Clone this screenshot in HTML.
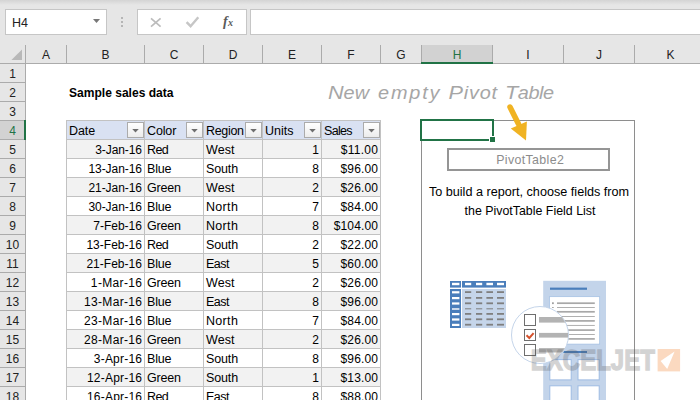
<!DOCTYPE html>
<html><head><meta charset="utf-8"><title>Pivot Table</title>
<style>
html,body{margin:0;padding:0;}
body{width:700px;height:400px;overflow:hidden;position:relative;background:#fff;font-family:"Liberation Sans",sans-serif;font-size:12px;color:#000;}
.a{position:absolute;}
.chrome{left:0;top:0;width:700px;height:64px;background:#e6e6e6;}
.topgrad{left:0;top:0;width:700px;height:5px;background:linear-gradient(#d4d4d4,#e6e6e6);}
.box{background:#fff;border:1px solid #c6c6c6;box-sizing:border-box;}
.ch{top:45px;height:18px;line-height:20px;text-align:center;color:#222;}
.vs{top:45px;width:1px;height:18px;background:#ababab;}
.rh{left:0;width:25px;height:18px;line-height:20px;text-align:center;color:#222;}
.hs{left:0;width:25px;height:1px;background:#ababab;}
.c{height:18px;line-height:20px;white-space:nowrap;font-size:12.5px;}
.n{font-size:12px;}
.r{text-align:right;}
.fb{width:15px;height:14px;border:1px solid #ababab;background:linear-gradient(#fff,#ececec);box-sizing:content-box;}
.fb i{position:absolute;left:3.8px;top:5.5px;width:7.4px;height:4px;background:#6e6e6e;clip-path:polygon(0 0,100% 0,50% 100%);}
</style></head><body>
<div class="a chrome"></div>
<div class="a topgrad"></div>
<div class="a box" style="left:5px;top:9px;width:102px;height:26px;"></div>
<div class="a" style="left:12px;top:16px;line-height:14px;font-size:12.5px;color:#222;">H4</div>
<div class="a" style="left:93px;top:19px;width:7px;height:4px;background:#777;clip-path:polygon(0 0,100% 0,50% 100%);"></div>
<div class="a" style="left:121px;top:17px;width:2px;height:2px;background:#b5b5b5;"></div>
<div class="a" style="left:121px;top:21px;width:2px;height:2px;background:#b5b5b5;"></div>
<div class="a" style="left:121px;top:25px;width:2px;height:2px;background:#b5b5b5;"></div>
<div class="a box" style="left:137px;top:9px;width:110px;height:26px;"></div>
<svg class="a" style="left:137px;top:9px;" width="110" height="26" viewBox="0 0 110 26">
<path d="M14 9.3 L23.6 17.7 M23.6 9.3 L14 17.7" stroke="#bcbcbc" stroke-width="1.7" fill="none"/>
<path d="M49.6 13.2 L53.6 17.2 L61.3 8.3" stroke="#c6c6c6" stroke-width="2.4" fill="none"/>
<text x="86" y="17" font-family="Liberation Serif,serif" font-style="italic" font-weight="bold" font-size="14" fill="#5a5a5a">f</text>
<text x="91" y="17" font-family="Liberation Serif,serif" font-style="italic" font-weight="bold" font-size="10" fill="#5a5a5a">x</text>
</svg>
<div class="a box" style="left:250px;top:9px;width:460px;height:26px;"></div>
<div class="a" style="left:0;top:63px;width:700px;height:1px;background:#ababab;"></div>

<div class="a" style="left:11.2px;top:49.4px;width:10.8px;height:10.8px;background:#b8b8b8;clip-path:polygon(100% 0,100% 100%,0 100%);"></div>
<div class="a ch" style="left:26px;width:40px;">A</div>
<div class="a ch" style="left:67px;width:77px;">B</div>
<div class="a ch" style="left:145px;width:58px;">C</div>
<div class="a ch" style="left:204px;width:58px;">D</div>
<div class="a ch" style="left:263px;width:58px;">E</div>
<div class="a ch" style="left:322px;width:58px;">F</div>
<div class="a ch" style="left:381px;width:40px;">G</div>
<div class="a" style="left:422px;top:45px;width:70px;height:17px;background:#d2d2d2;"></div>
<div class="a" style="left:421px;top:62px;width:72px;height:2px;background:#217346;z-index:2;"></div>
<div class="a ch" style="left:422px;width:70px;color:#217346;">H</div>
<div class="a ch" style="left:493px;width:70px;">I</div>
<div class="a ch" style="left:564px;width:70px;">J</div>
<div class="a ch" style="left:635px;width:71px;">K</div>
<div class="a vs" style="left:25px;"></div>
<div class="a vs" style="left:66px;"></div>
<div class="a vs" style="left:144px;"></div>
<div class="a vs" style="left:203px;"></div>
<div class="a vs" style="left:262px;"></div>
<div class="a vs" style="left:321px;"></div>
<div class="a vs" style="left:380px;"></div>
<div class="a vs" style="left:421px;"></div>
<div class="a vs" style="left:492px;"></div>
<div class="a vs" style="left:563px;"></div>
<div class="a vs" style="left:634px;"></div>
<div class="a" style="left:0;top:64px;width:25px;height:336px;background:#e6e6e6;"></div>
<div class="a" style="left:25px;top:64px;width:1px;height:336px;background:#ababab;"></div>
<div class="a rh" style="top:64px;">1</div>
<div class="a hs" style="top:82px;"></div>
<div class="a rh" style="top:83px;">2</div>
<div class="a hs" style="top:101px;"></div>
<div class="a rh" style="top:102px;">3</div>
<div class="a hs" style="top:120px;"></div>
<div class="a" style="left:0;top:121px;width:24px;height:18px;background:#d2d2d2;"></div>
<div class="a" style="left:24px;top:120px;width:2px;height:20px;background:#217346;z-index:2;"></div>
<div class="a rh" style="top:121px;color:#217346;">4</div>
<div class="a hs" style="top:139px;"></div>
<div class="a rh" style="top:140px;">5</div>
<div class="a hs" style="top:158px;"></div>
<div class="a rh" style="top:159px;">6</div>
<div class="a hs" style="top:177px;"></div>
<div class="a rh" style="top:178px;">7</div>
<div class="a hs" style="top:196px;"></div>
<div class="a rh" style="top:197px;">8</div>
<div class="a hs" style="top:215px;"></div>
<div class="a rh" style="top:216px;">9</div>
<div class="a hs" style="top:234px;"></div>
<div class="a rh" style="top:235px;">10</div>
<div class="a hs" style="top:253px;"></div>
<div class="a rh" style="top:254px;">11</div>
<div class="a hs" style="top:272px;"></div>
<div class="a rh" style="top:273px;">12</div>
<div class="a hs" style="top:291px;"></div>
<div class="a rh" style="top:292px;">13</div>
<div class="a hs" style="top:310px;"></div>
<div class="a rh" style="top:311px;">14</div>
<div class="a hs" style="top:329px;"></div>
<div class="a rh" style="top:330px;">15</div>
<div class="a hs" style="top:348px;"></div>
<div class="a rh" style="top:349px;">16</div>
<div class="a hs" style="top:367px;"></div>
<div class="a rh" style="top:368px;">17</div>
<div class="a hs" style="top:386px;"></div>
<div class="a rh" style="top:387px;">18</div>
<div class="a hs" style="top:405px;"></div>
<div class="a c" style="left:69px;top:83px;font-weight:bold;font-size:12.05px;">Sample sales data</div>
<div class="a" style="left:66px;top:120px;width:315px;height:286px;background:#c2c2c2;"></div>
<div class="a" style="left:67px;top:121px;width:77px;height:18px;background:#d9e1f2;"></div>
<div class="a c" style="left:69px;top:121px;letter-spacing:-0.10px;">Date</div>
<div class="a fb" style="left:127px;top:122px;"><i></i></div>
<div class="a" style="left:145px;top:121px;width:58px;height:18px;background:#d9e1f2;"></div>
<div class="a c" style="left:147px;top:121px;letter-spacing:-0.13px;">Color</div>
<div class="a fb" style="left:186px;top:122px;"><i></i></div>
<div class="a" style="left:204px;top:121px;width:58px;height:18px;background:#d9e1f2;"></div>
<div class="a c" style="left:206px;top:121px;letter-spacing:-0.32px;">Region</div>
<div class="a fb" style="left:245px;top:122px;"><i></i></div>
<div class="a" style="left:263px;top:121px;width:58px;height:18px;background:#d9e1f2;"></div>
<div class="a c" style="left:265px;top:121px;letter-spacing:0.03px;">Units</div>
<div class="a fb" style="left:304px;top:122px;"><i></i></div>
<div class="a" style="left:322px;top:121px;width:58px;height:18px;background:#d9e1f2;"></div>
<div class="a c" style="left:324px;top:121px;letter-spacing:-0.70px;">Sales</div>
<div class="a fb" style="left:363px;top:122px;"><i></i></div>
<div class="a" style="left:67px;top:140px;width:77px;height:18px;background:#f2f2f2;"></div>
<div class="a c r n" style="left:67px;top:140px;width:74.91px;letter-spacing:-0.09px;">3-Jan-16</div>
<div class="a" style="left:145px;top:140px;width:58px;height:18px;background:#f2f2f2;"></div>
<div class="a c" style="left:147px;top:140px;letter-spacing:-0.60px;">Red</div>
<div class="a" style="left:204px;top:140px;width:58px;height:18px;background:#f2f2f2;"></div>
<div class="a c" style="left:206px;top:140px;letter-spacing:0.07px;">West</div>
<div class="a" style="left:263px;top:140px;width:58px;height:18px;background:#f2f2f2;"></div>
<div class="a c r n" style="left:263px;top:140px;width:56.17px;letter-spacing:0.17px;">1</div>
<div class="a" style="left:322px;top:140px;width:58px;height:18px;background:#f2f2f2;"></div>
<div class="a c r n" style="left:322px;top:140px;width:56.30px;letter-spacing:0.30px;">$11.00</div>
<div class="a" style="left:67px;top:159px;width:77px;height:18px;background:#ffffff;"></div>
<div class="a c r n" style="left:67px;top:159px;width:74.94px;letter-spacing:-0.06px;">13-Jan-16</div>
<div class="a" style="left:145px;top:159px;width:58px;height:18px;background:#ffffff;"></div>
<div class="a c" style="left:147px;top:159px;letter-spacing:-0.19px;">Blue</div>
<div class="a" style="left:204px;top:159px;width:58px;height:18px;background:#ffffff;"></div>
<div class="a c" style="left:206px;top:159px;letter-spacing:-0.13px;">South</div>
<div class="a" style="left:263px;top:159px;width:58px;height:18px;background:#ffffff;"></div>
<div class="a c r n" style="left:263px;top:159px;width:56.17px;letter-spacing:0.17px;">8</div>
<div class="a" style="left:322px;top:159px;width:58px;height:18px;background:#ffffff;"></div>
<div class="a c r n" style="left:322px;top:159px;width:56.15px;letter-spacing:0.15px;">$96.00</div>
<div class="a" style="left:67px;top:178px;width:77px;height:18px;background:#f2f2f2;"></div>
<div class="a c r n" style="left:67px;top:178px;width:74.94px;letter-spacing:-0.06px;">21-Jan-16</div>
<div class="a" style="left:145px;top:178px;width:58px;height:18px;background:#f2f2f2;"></div>
<div class="a c" style="left:147px;top:178px;letter-spacing:-0.20px;">Green</div>
<div class="a" style="left:204px;top:178px;width:58px;height:18px;background:#f2f2f2;"></div>
<div class="a c" style="left:206px;top:178px;letter-spacing:0.07px;">West</div>
<div class="a" style="left:263px;top:178px;width:58px;height:18px;background:#f2f2f2;"></div>
<div class="a c r n" style="left:263px;top:178px;width:56.17px;letter-spacing:0.17px;">2</div>
<div class="a" style="left:322px;top:178px;width:58px;height:18px;background:#f2f2f2;"></div>
<div class="a c r n" style="left:322px;top:178px;width:56.15px;letter-spacing:0.15px;">$26.00</div>
<div class="a" style="left:67px;top:197px;width:77px;height:18px;background:#ffffff;"></div>
<div class="a c r n" style="left:67px;top:197px;width:74.94px;letter-spacing:-0.06px;">30-Jan-16</div>
<div class="a" style="left:145px;top:197px;width:58px;height:18px;background:#ffffff;"></div>
<div class="a c" style="left:147px;top:197px;letter-spacing:-0.19px;">Blue</div>
<div class="a" style="left:204px;top:197px;width:58px;height:18px;background:#ffffff;"></div>
<div class="a c" style="left:206px;top:197px;letter-spacing:0.32px;">North</div>
<div class="a" style="left:263px;top:197px;width:58px;height:18px;background:#ffffff;"></div>
<div class="a c r n" style="left:263px;top:197px;width:56.17px;letter-spacing:0.17px;">7</div>
<div class="a" style="left:322px;top:197px;width:58px;height:18px;background:#ffffff;"></div>
<div class="a c r n" style="left:322px;top:197px;width:56.15px;letter-spacing:0.15px;">$84.00</div>
<div class="a" style="left:67px;top:216px;width:77px;height:18px;background:#f2f2f2;"></div>
<div class="a c r n" style="left:67px;top:216px;width:75.01px;letter-spacing:0.01px;">7-Feb-16</div>
<div class="a" style="left:145px;top:216px;width:58px;height:18px;background:#f2f2f2;"></div>
<div class="a c" style="left:147px;top:216px;letter-spacing:-0.20px;">Green</div>
<div class="a" style="left:204px;top:216px;width:58px;height:18px;background:#f2f2f2;"></div>
<div class="a c" style="left:206px;top:216px;letter-spacing:0.32px;">North</div>
<div class="a" style="left:263px;top:216px;width:58px;height:18px;background:#f2f2f2;"></div>
<div class="a c r n" style="left:263px;top:216px;width:56.17px;letter-spacing:0.17px;">8</div>
<div class="a" style="left:322px;top:216px;width:58px;height:18px;background:#f2f2f2;"></div>
<div class="a c r n" style="left:322px;top:216px;width:56.16px;letter-spacing:0.16px;">$104.00</div>
<div class="a" style="left:67px;top:235px;width:77px;height:18px;background:#ffffff;"></div>
<div class="a c r n" style="left:67px;top:235px;width:75.03px;letter-spacing:0.03px;">13-Feb-16</div>
<div class="a" style="left:145px;top:235px;width:58px;height:18px;background:#ffffff;"></div>
<div class="a c" style="left:147px;top:235px;letter-spacing:-0.60px;">Red</div>
<div class="a" style="left:204px;top:235px;width:58px;height:18px;background:#ffffff;"></div>
<div class="a c" style="left:206px;top:235px;letter-spacing:-0.13px;">South</div>
<div class="a" style="left:263px;top:235px;width:58px;height:18px;background:#ffffff;"></div>
<div class="a c r n" style="left:263px;top:235px;width:56.17px;letter-spacing:0.17px;">2</div>
<div class="a" style="left:322px;top:235px;width:58px;height:18px;background:#ffffff;"></div>
<div class="a c r n" style="left:322px;top:235px;width:56.15px;letter-spacing:0.15px;">$22.00</div>
<div class="a" style="left:67px;top:254px;width:77px;height:18px;background:#f2f2f2;"></div>
<div class="a c r n" style="left:67px;top:254px;width:75.03px;letter-spacing:0.03px;">21-Feb-16</div>
<div class="a" style="left:145px;top:254px;width:58px;height:18px;background:#f2f2f2;"></div>
<div class="a c" style="left:147px;top:254px;letter-spacing:-0.19px;">Blue</div>
<div class="a" style="left:204px;top:254px;width:58px;height:18px;background:#f2f2f2;"></div>
<div class="a c" style="left:206px;top:254px;letter-spacing:-0.54px;">East</div>
<div class="a" style="left:263px;top:254px;width:58px;height:18px;background:#f2f2f2;"></div>
<div class="a c r n" style="left:263px;top:254px;width:56.17px;letter-spacing:0.17px;">5</div>
<div class="a" style="left:322px;top:254px;width:58px;height:18px;background:#f2f2f2;"></div>
<div class="a c r n" style="left:322px;top:254px;width:56.15px;letter-spacing:0.15px;">$60.00</div>
<div class="a" style="left:67px;top:273px;width:77px;height:18px;background:#ffffff;"></div>
<div class="a c r n" style="left:67px;top:273px;width:75.35px;letter-spacing:0.35px;">1-Mar-16</div>
<div class="a" style="left:145px;top:273px;width:58px;height:18px;background:#ffffff;"></div>
<div class="a c" style="left:147px;top:273px;letter-spacing:-0.20px;">Green</div>
<div class="a" style="left:204px;top:273px;width:58px;height:18px;background:#ffffff;"></div>
<div class="a c" style="left:206px;top:273px;letter-spacing:0.07px;">West</div>
<div class="a" style="left:263px;top:273px;width:58px;height:18px;background:#ffffff;"></div>
<div class="a c r n" style="left:263px;top:273px;width:56.17px;letter-spacing:0.17px;">2</div>
<div class="a" style="left:322px;top:273px;width:58px;height:18px;background:#ffffff;"></div>
<div class="a c r n" style="left:322px;top:273px;width:56.15px;letter-spacing:0.15px;">$26.00</div>
<div class="a" style="left:67px;top:292px;width:77px;height:18px;background:#f2f2f2;"></div>
<div class="a c r n" style="left:67px;top:292px;width:75.33px;letter-spacing:0.33px;">13-Mar-16</div>
<div class="a" style="left:145px;top:292px;width:58px;height:18px;background:#f2f2f2;"></div>
<div class="a c" style="left:147px;top:292px;letter-spacing:-0.19px;">Blue</div>
<div class="a" style="left:204px;top:292px;width:58px;height:18px;background:#f2f2f2;"></div>
<div class="a c" style="left:206px;top:292px;letter-spacing:-0.54px;">East</div>
<div class="a" style="left:263px;top:292px;width:58px;height:18px;background:#f2f2f2;"></div>
<div class="a c r n" style="left:263px;top:292px;width:56.17px;letter-spacing:0.17px;">8</div>
<div class="a" style="left:322px;top:292px;width:58px;height:18px;background:#f2f2f2;"></div>
<div class="a c r n" style="left:322px;top:292px;width:56.15px;letter-spacing:0.15px;">$96.00</div>
<div class="a" style="left:67px;top:311px;width:77px;height:18px;background:#ffffff;"></div>
<div class="a c r n" style="left:67px;top:311px;width:75.33px;letter-spacing:0.33px;">23-Mar-16</div>
<div class="a" style="left:145px;top:311px;width:58px;height:18px;background:#ffffff;"></div>
<div class="a c" style="left:147px;top:311px;letter-spacing:-0.19px;">Blue</div>
<div class="a" style="left:204px;top:311px;width:58px;height:18px;background:#ffffff;"></div>
<div class="a c" style="left:206px;top:311px;letter-spacing:0.32px;">North</div>
<div class="a" style="left:263px;top:311px;width:58px;height:18px;background:#ffffff;"></div>
<div class="a c r n" style="left:263px;top:311px;width:56.17px;letter-spacing:0.17px;">7</div>
<div class="a" style="left:322px;top:311px;width:58px;height:18px;background:#ffffff;"></div>
<div class="a c r n" style="left:322px;top:311px;width:56.15px;letter-spacing:0.15px;">$84.00</div>
<div class="a" style="left:67px;top:330px;width:77px;height:18px;background:#f2f2f2;"></div>
<div class="a c r n" style="left:67px;top:330px;width:75.33px;letter-spacing:0.33px;">28-Mar-16</div>
<div class="a" style="left:145px;top:330px;width:58px;height:18px;background:#f2f2f2;"></div>
<div class="a c" style="left:147px;top:330px;letter-spacing:-0.20px;">Green</div>
<div class="a" style="left:204px;top:330px;width:58px;height:18px;background:#f2f2f2;"></div>
<div class="a c" style="left:206px;top:330px;letter-spacing:0.07px;">West</div>
<div class="a" style="left:263px;top:330px;width:58px;height:18px;background:#f2f2f2;"></div>
<div class="a c r n" style="left:263px;top:330px;width:56.17px;letter-spacing:0.17px;">2</div>
<div class="a" style="left:322px;top:330px;width:58px;height:18px;background:#f2f2f2;"></div>
<div class="a c r n" style="left:322px;top:330px;width:56.15px;letter-spacing:0.15px;">$26.00</div>
<div class="a" style="left:67px;top:349px;width:77px;height:18px;background:#ffffff;"></div>
<div class="a c r n" style="left:67px;top:349px;width:75.22px;letter-spacing:0.22px;">3-Apr-16</div>
<div class="a" style="left:145px;top:349px;width:58px;height:18px;background:#ffffff;"></div>
<div class="a c" style="left:147px;top:349px;letter-spacing:-0.19px;">Blue</div>
<div class="a" style="left:204px;top:349px;width:58px;height:18px;background:#ffffff;"></div>
<div class="a c" style="left:206px;top:349px;letter-spacing:-0.13px;">South</div>
<div class="a" style="left:263px;top:349px;width:58px;height:18px;background:#ffffff;"></div>
<div class="a c r n" style="left:263px;top:349px;width:56.17px;letter-spacing:0.17px;">8</div>
<div class="a" style="left:322px;top:349px;width:58px;height:18px;background:#ffffff;"></div>
<div class="a c r n" style="left:322px;top:349px;width:56.15px;letter-spacing:0.15px;">$96.00</div>
<div class="a" style="left:67px;top:368px;width:77px;height:18px;background:#f2f2f2;"></div>
<div class="a c r n" style="left:67px;top:368px;width:75.21px;letter-spacing:0.21px;">12-Apr-16</div>
<div class="a" style="left:145px;top:368px;width:58px;height:18px;background:#f2f2f2;"></div>
<div class="a c" style="left:147px;top:368px;letter-spacing:-0.20px;">Green</div>
<div class="a" style="left:204px;top:368px;width:58px;height:18px;background:#f2f2f2;"></div>
<div class="a c" style="left:206px;top:368px;letter-spacing:-0.13px;">South</div>
<div class="a" style="left:263px;top:368px;width:58px;height:18px;background:#f2f2f2;"></div>
<div class="a c r n" style="left:263px;top:368px;width:56.17px;letter-spacing:0.17px;">1</div>
<div class="a" style="left:322px;top:368px;width:58px;height:18px;background:#f2f2f2;"></div>
<div class="a c r n" style="left:322px;top:368px;width:56.15px;letter-spacing:0.15px;">$13.00</div>
<div class="a" style="left:67px;top:387px;width:77px;height:18px;background:#ffffff;"></div>
<div class="a c r n" style="left:67px;top:387px;width:75.21px;letter-spacing:0.21px;">16-Apr-16</div>
<div class="a" style="left:145px;top:387px;width:58px;height:18px;background:#ffffff;"></div>
<div class="a c" style="left:147px;top:387px;letter-spacing:-0.60px;">Red</div>
<div class="a" style="left:204px;top:387px;width:58px;height:18px;background:#ffffff;"></div>
<div class="a c" style="left:206px;top:387px;letter-spacing:-0.54px;">East</div>
<div class="a" style="left:263px;top:387px;width:58px;height:18px;background:#ffffff;"></div>
<div class="a c r n" style="left:263px;top:387px;width:56.17px;letter-spacing:0.17px;">8</div>
<div class="a" style="left:322px;top:387px;width:58px;height:18px;background:#ffffff;"></div>
<div class="a c r n" style="left:322px;top:387px;width:56.15px;letter-spacing:0.15px;">$88.00</div>
<div class="a" style="left:421px;top:120px;width:212px;height:300px;border:1px solid #8e8e8e;"></div>
<div class="a" style="left:447px;top:148px;width:159px;height:19px;border:2px solid #959595;"></div>
<div class="a" style="left:448.7px;top:153px;width:163px;text-align:center;color:#8c8c8c;line-height:14px;font-size:12.4px;letter-spacing:0.35px;">PivotTable2</div>
<div class="a" style="left:422px;top:185px;width:214px;text-align:center;line-height:14px;white-space:nowrap;font-size:12.65px;">To build a report, choose fields from</div>
<div class="a" style="left:423px;top:204px;width:214px;text-align:center;line-height:14px;white-space:nowrap;font-size:12.4px;">the PivotTable Field List</div>
<div class="a" style="left:420px;top:119px;width:70px;height:18px;border:2px solid #217346;"></div>
<div class="a" style="left:489px;top:136px;width:5px;height:5px;background:#217346;border:1px solid #fff;"></div>
<svg class="a" style="left:320px;top:76px;" width="250" height="36" viewBox="320 76 250 36">
<g font-family="Liberation Sans,sans-serif" font-style="italic" font-size="17.6" fill="#a6a6a6">
<text transform="translate(328,99) scale(1.13,1)" x="0" y="0" textLength="36.28" lengthAdjust="spacing"><tspan font-size="19.2">N</tspan>ew</text>
<text transform="translate(378,99) scale(1.13,1)" x="0" y="0" textLength="54.42" lengthAdjust="spacing">empty</text>
<text transform="translate(448.6,99) scale(1.13,1)" x="0" y="0" textLength="42.92" lengthAdjust="spacing"><tspan font-size="19.2">P</tspan>ivot</text>
<text transform="translate(505,99) scale(1.13,1)" x="0" y="0" textLength="43.36" lengthAdjust="spacing"><tspan font-size="19.2">T</tspan>able</text>
</g></svg>
<svg class="a" style="left:495px;top:90px;" width="50" height="60" viewBox="0 0 50 60">
<path d="M15 17 L23.5 34" stroke="#f0b323" stroke-width="5.5" stroke-linecap="round" fill="none"/>
<path d="M31 50.6 L15.8 38.5 L31.9 31.4 Z" fill="#f0b323"/>
</svg>
<svg class="a" style="left:440px;top:270px;" width="260" height="130" viewBox="440 270 260 130">
<rect x="450" y="281" width="11" height="6.6" fill="#4a7ebb"/>
<rect x="462" y="281" width="44" height="6.6" fill="#4a7ebb"/>
<rect x="450" y="289" width="11" height="39" fill="#4a7ebb"/>
<rect x="462" y="289" width="44" height="39" fill="#c5d5ea"/>
<rect x="452" y="282.8" width="7.4" height="2.4" fill="#fff"/>
<rect x="465" y="282.8" width="6.2" height="2.4" fill="#fff"/>
<rect x="476" y="282.8" width="6.2" height="2.4" fill="#fff"/>
<rect x="486.4" y="282.8" width="6.6" height="2.4" fill="#fff"/>
<rect x="497" y="282.8" width="7" height="2.4" fill="#fff"/>
<rect x="452" y="291.2" width="7.4" height="2.2" fill="#fff"/>
<rect x="465" y="291.2" width="6.2" height="1.8" fill="#7f7f7f"/>
<rect x="476" y="291.2" width="6.2" height="1.8" fill="#7f7f7f"/>
<rect x="486.4" y="291.2" width="6.6" height="1.8" fill="#7f7f7f"/>
<rect x="497" y="291.2" width="7" height="1.8" fill="#7f7f7f"/>
<rect x="452" y="297" width="7.4" height="2.2" fill="#fff"/>
<rect x="465" y="297" width="6.2" height="1.8" fill="#7f7f7f"/>
<rect x="476" y="297" width="6.2" height="1.8" fill="#7f7f7f"/>
<rect x="486.4" y="297" width="6.6" height="1.8" fill="#7f7f7f"/>
<rect x="497" y="297" width="7" height="1.8" fill="#7f7f7f"/>
<rect x="452" y="302.4" width="7.4" height="2.2" fill="#fff"/>
<rect x="465" y="302.4" width="6.2" height="1.8" fill="#7f7f7f"/>
<rect x="476" y="302.4" width="6.2" height="1.8" fill="#7f7f7f"/>
<rect x="486.4" y="302.4" width="6.6" height="1.8" fill="#7f7f7f"/>
<rect x="497" y="302.4" width="7" height="1.8" fill="#7f7f7f"/>
<rect x="452" y="308.29999999999995" width="7.4" height="1.4" fill="#fff"/>
<rect x="465" y="308.29999999999995" width="6.2" height="1.0" fill="#7f7f7f"/>
<rect x="476" y="308.29999999999995" width="6.2" height="1.0" fill="#7f7f7f"/>
<rect x="486.4" y="308.29999999999995" width="6.6" height="1.0" fill="#7f7f7f"/>
<rect x="497" y="308.29999999999995" width="7" height="1.0" fill="#7f7f7f"/>
<rect x="452" y="313" width="7.4" height="2.2" fill="#fff"/>
<rect x="465" y="313" width="6.2" height="1.8" fill="#7f7f7f"/>
<rect x="476" y="313" width="6.2" height="1.8" fill="#7f7f7f"/>
<rect x="486.4" y="313" width="6.6" height="1.8" fill="#7f7f7f"/>
<rect x="497" y="313" width="7" height="1.8" fill="#7f7f7f"/>
<rect x="452" y="318.4" width="7.4" height="2.2" fill="#fff"/>
<rect x="465" y="318.4" width="6.2" height="1.8" fill="#7f7f7f"/>
<rect x="476" y="318.4" width="6.2" height="1.8" fill="#7f7f7f"/>
<rect x="486.4" y="318.4" width="6.6" height="1.8" fill="#7f7f7f"/>
<rect x="497" y="318.4" width="7" height="1.8" fill="#7f7f7f"/>
<rect x="452" y="323.8" width="7.4" height="2.2" fill="#fff"/>
<rect x="465" y="323.8" width="6.2" height="1.8" fill="#7f7f7f"/>
<rect x="476" y="323.8" width="6.2" height="1.8" fill="#7f7f7f"/>
<rect x="486.4" y="323.8" width="6.6" height="1.8" fill="#7f7f7f"/>
<rect x="497" y="323.8" width="7" height="1.8" fill="#7f7f7f"/>
<rect x="543.2" y="280.8" width="62.8" height="125" fill="#c3d4ea"/>
<rect x="550" y="287.6" width="37" height="2.2" fill="#4a7ebb"/>
<rect x="549.4" y="296.7" width="50.3" height="47.4" fill="#fff" stroke="#9fbde2" stroke-width="0.7"/>
<rect x="557" y="302.35" width="37.8" height="1.7" fill="#a8a8a8"/>
<rect x="557" y="307.05" width="37.8" height="0.9" fill="#a8a8a8"/>
<rect x="557" y="310.95" width="37.8" height="1.7" fill="#a8a8a8"/>
<rect x="557" y="316.05" width="37.8" height="0.9" fill="#a8a8a8"/>
<rect x="557" y="320.05" width="37.8" height="1.7" fill="#a8a8a8"/>
<rect x="557" y="324.95" width="37.8" height="0.9" fill="#a8a8a8"/>
<rect x="557" y="329.25" width="37.8" height="1.7" fill="#a8a8a8"/>
<rect x="557" y="334.05" width="37.8" height="0.9" fill="#a8a8a8"/>
<rect x="557" y="338.05" width="37.8" height="1.7" fill="#a8a8a8"/>
<rect x="552" y="302.3" width="1.8" height="1.8" fill="#a0a0a0"/>
<rect x="552" y="307" width="1.8" height="0.9" fill="#a0a0a0"/>
<rect x="563.4" y="351" width="23.6" height="2" fill="#4a7ebb"/>
<rect x="549.8" y="359.6" width="21.4" height="20.3" fill="#fff" stroke="#9dbbe3" stroke-width="1"/>
<rect x="578" y="359.6" width="21.2" height="20.3" fill="#fff" stroke="#9dbbe3" stroke-width="1"/>
<rect x="549.8" y="385.8" width="21.4" height="20.3" fill="#fff" stroke="#9dbbe3" stroke-width="1"/>
<rect x="578" y="385.8" width="21.2" height="20.3" fill="#fff" stroke="#9dbbe3" stroke-width="1"/>
<defs><clipPath id="cc"><circle cx="540" cy="335" r="28.2"/></clipPath></defs>
<circle cx="540" cy="335" r="28.5" fill="#fff" stroke="#c5d5ea" stroke-width="1"/>
<g clip-path="url(#cc)">
<rect x="539" y="317" width="32" height="5.6" fill="#b3b3b3"/>
<rect x="539" y="332.9" width="32" height="4.7" fill="#b3b3b3"/>
<rect x="539" y="348.1" width="32" height="4.4" fill="#b3b3b3"/>
</g>
<rect x="524.5" y="314.5" width="11" height="11" fill="#fff" stroke="#6e6e6e" stroke-width="1"/>
<rect x="524.5" y="329.5" width="11" height="11" fill="#fff" stroke="#6e6e6e" stroke-width="1"/>
<rect x="524.5" y="344.5" width="11" height="11" fill="#fff" stroke="#6e6e6e" stroke-width="1"/>
<path d="M526.5 335.3 L529.3 338 L533.6 333.1" stroke="#d5522d" stroke-width="2" fill="none"/>
<g opacity="0.25">
<text x="530.8" y="370.4" font-family="Liberation Sans,sans-serif" font-weight="bold" font-size="29.5" fill="#555" stroke="#555" stroke-width="1.4" textLength="124" lengthAdjust="spacingAndGlyphs">EXCELJET</text>
</g>
<rect x="657.6" y="349" width="22.5" height="22.4" fill="#fbd9c0"/>
<path d="M674.6 351.4 L660.6 361 L667.2 368.9 Z" fill="#fff"/>
</svg>
</body></html>
